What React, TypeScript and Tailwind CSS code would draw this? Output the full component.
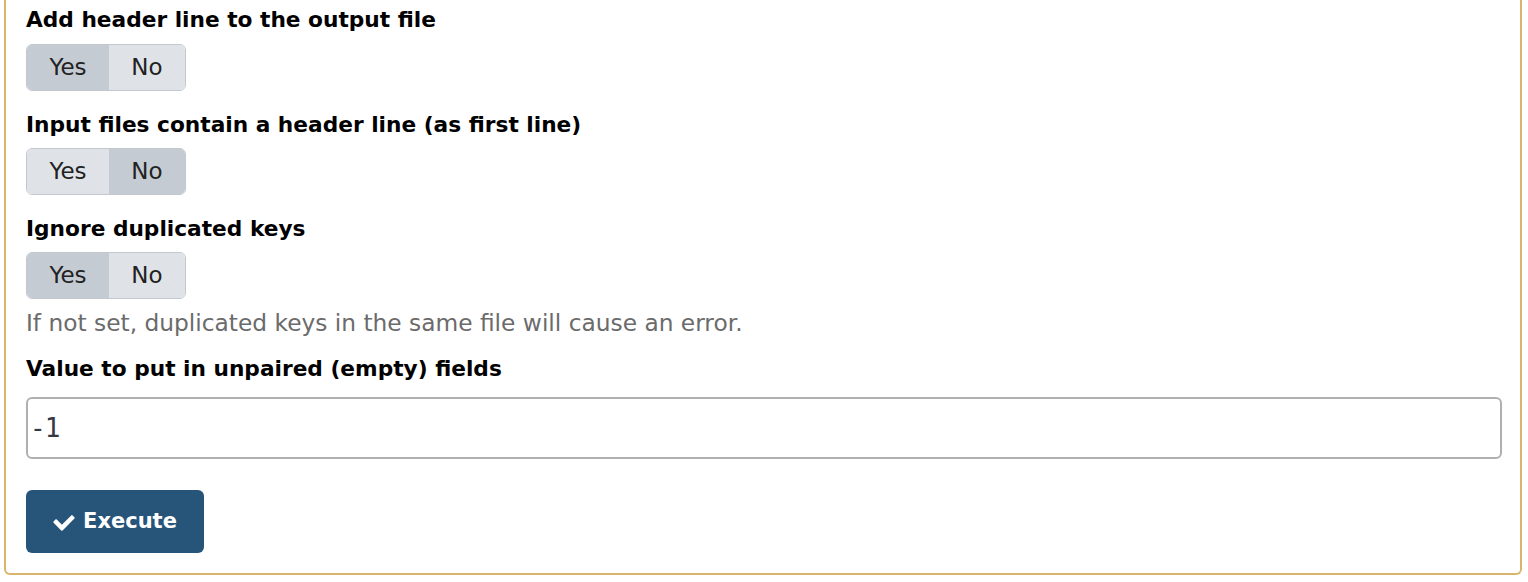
const Toggle = ({ value }: { value: "yes" | "no" }) => {
  const on = "bg-[#c4cbd2]";
  const off = "bg-[#dfe3e8]";
  return (
    <div className="flex w-[160px] h-[47px] rounded-[6px] border border-[#c2c8ce] overflow-hidden text-[23px] text-[#222]">
      <button className={`w-[82px] h-full ${value === "yes" ? on : off}`}>Yes</button>
      <button className={`flex-1 h-full ${value === "no" ? on : off}`}>No</button>
    </div>
  );
};

const Label = ({ children, className = "" }: { children: React.ReactNode; className?: string }) => (
  <div className={`text-[21.7px] font-bold leading-[28px] text-black ${className}`}>{children}</div>
);

export default function App() {
  return (
    <div className="w-[1528px] h-[582px] bg-white overflow-hidden font-['DejaVu_Sans',sans-serif]">
      <div className="ml-[4px] w-[1518px] border-x-2 border-b-2 border-[#d8b56a] rounded-b-[6px] pl-[20px] pr-[19px] pt-[6px] pb-[20px]">
        <Label>Add header line to the output file</Label>
        <div className="mt-[10px]">
          <Toggle value="yes" />
        </div>

        <Label className="mt-[20px]">Input files contain a header line (as first line)</Label>
        <div className="mt-[9px]">
          <Toggle value="no" />
        </div>

        <Label className="mt-[20px]">Ignore duplicated keys</Label>
        <div className="mt-[9px]">
          <Toggle value="yes" />
        </div>
        <div className="mt-[10px] text-[23.3px] leading-[28px] text-[#6b6b6b]">
          If not set, duplicated keys in the same file will cause an error.
        </div>

        <Label className="mt-[18px]">Value to put in unpaired (empty) fields</Label>
        <input
          defaultValue="-1"
          className="mt-[14px] block w-[1476px] h-[62px] pl-[2px] rounded-[6px] border-2 border-[#b0b0b0] text-[26px] tracking-[-1px] text-[#333a42] font-['DejaVu_Sans_Mono',monospace] outline-none"
        />

        <button className="mt-[31px] flex items-center gap-[8px] h-[63px] w-[178px] justify-center rounded-[6px] bg-[#275479] text-white text-[21px] font-bold">
          <svg width="22" height="18" viewBox="0 0 22 18" fill="white">
            <path d="M8.2 17.4 0.6 9.8a1 1 0 0 1 0-1.4l1.8-1.8a1 1 0 0 1 1.4 0L8.9 11.7 18.2 2.4a1 1 0 0 1 1.4 0l1.8 1.8a1 1 0 0 1 0 1.4L9.6 17.4a1 1 0 0 1-1.4 0z" />
          </svg>
          Execute
        </button>
      </div>
    </div>
  );
}
